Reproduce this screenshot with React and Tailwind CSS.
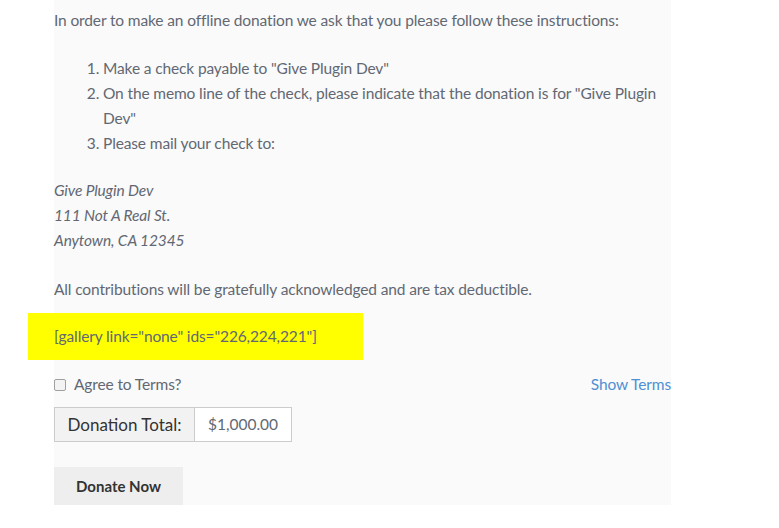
export default function App() {
  return (
    <div className="w-[779px] h-[528px] bg-white overflow-hidden">
      <div className="ml-[54px] w-[617px] h-[505px] bg-[#fafafa] pt-[8px] text-[15.5px] tracking-[-0.13px] leading-[25px] text-[#626873] font-['Lato',sans-serif]">
        <p>In order to make an offline donation we ask that you please follow these instructions:</p>
        <ol className="mt-[23px] list-decimal pl-[49px]">
          <li>Make a check payable to "Give Plugin Dev"</li>
          <li>
            <span className="whitespace-nowrap">On the memo line of the check, please indicate that the donation is for "Give Plugin</span>
            <br />Dev"
          </li>
          <li>Please mail your check to:</li>
        </ol>
        <p className="mt-[22px] italic">
          Give Plugin Dev<br />111 Not A Real St.<br />Anytown, CA 12345
        </p>
        <p className="mt-[24px]">All contributions will be gratefully acknowledged and are tax deductible.</p>
        <div className="mt-[11px] -ml-[26px] w-[335px] h-[47px] bg-[#ffff00] pl-[26px] pt-[11px]">
          <p>[gallery link="none" ids="226,224,221"]</p>
        </div>
        <div className="mt-[12px] flex items-center justify-between h-[25px]">
          <label className="flex items-center">
            <span className="w-[12px] h-[12px] rounded-[2px] border border-[#a0a0a0] bg-[#f3f3f3] mr-[8px]"></span>
            <span>Agree to Terms?</span>
          </label>
          <span className="text-[#4f8fd3]">Show Terms</span>
        </div>
        <div className="mt-[10px] flex w-[238px] h-[35px] border border-[#cccccc] tracking-normal">
          <div className="w-[140px] bg-[#f2f2f2] border-r border-[#cccccc] flex items-center justify-center text-[17px] text-[#333333]">Donation Total:</div>
          <div className="flex-1 bg-white flex items-center justify-center text-[15.5px] text-[#626873]">$1,000.00</div>
        </div>
        <button className="mt-[25px] w-[129px] h-[38px] bg-[#eeeeee] font-bold text-[15px] tracking-normal text-[#333333] flex items-center justify-center">Donate Now</button>
      </div>
    </div>
  );
}
